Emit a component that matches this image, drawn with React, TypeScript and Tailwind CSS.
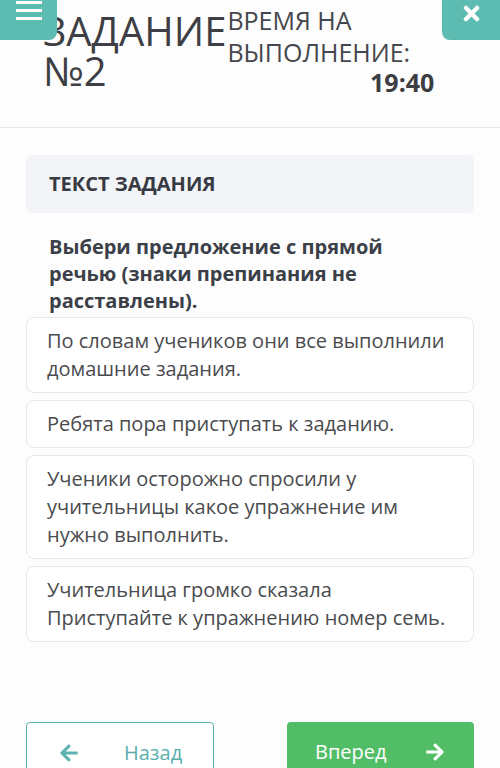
import { FaArrowLeft, FaArrowRight, FaTimes } from 'react-icons/fa'

const options = [
  'По словам учеников они все выполнили домашние задания.',
  'Ребята пора приступать к заданию.',
  'Ученики осторожно спросили у учительницы какое упражнение им нужно выполнить.',
  'Учительница громко сказала Приступайте к упражнению номер семь.',
]

function MenuButton() {
  return (
    <div className="absolute left-0 top-0 flex h-[40px] w-[57px] flex-col gap-[5px] rounded-br-lg bg-[#5dbcb2] pl-[16px] pt-[1px]">
      <span className="h-[3px] w-[26px] bg-white" />
      <span className="h-[3px] w-[26px] bg-white" />
      <span className="h-[3px] w-[26px] bg-white" />
    </div>
  )
}

function CloseButton() {
  return (
    <div className="absolute right-0 top-0 flex h-[40px] w-[58px] items-start justify-center rounded-bl-lg bg-[#5dbcb2] pt-[2px]">
      <FaTimes size={23} color="white" />
    </div>
  )
}

export default function App() {
  return (
    <div
      className="relative min-h-[768px] w-[500px] overflow-hidden bg-[#fdfdfd] text-[#3b3e45]"
      style={{ fontFamily: '"Open Sans", "Noto Sans", sans-serif' }}
    >
      {/* Header */}
      <div className="flex h-[128px] border-b border-[#e8e9eb] pl-[43px] pt-[11px]">
        <div className="text-[40px] leading-[40px] text-[#3d3f44]">
          ЗАДАНИЕ
          <br />
          №2
        </div>
        <div className="ml-[1px] mt-[-7px] flex w-[207px] flex-col text-[25px] leading-[32px] text-[#45474c]">
          <span>ВРЕМЯ НА</span>
          <span>ВЫПОЛНЕНИЕ:</span>
          <span className="mt-[-3px] text-right text-[25px] font-bold leading-[34px] text-[#3b3d42]">19:40</span>
        </div>
      </div>
      <MenuButton />
      <CloseButton />

      {/* Content */}
      <div className="px-[26px] pt-[27px]">
        <div className="flex h-[58px] items-center rounded-md bg-[#f2f4f7] pl-[23px] text-[20px] font-bold text-[#373a42]">
          ТЕКСТ ЗАДАНИЯ
        </div>
        <p className="mt-[20px] w-[375px] pl-[23px] text-[20px] font-bold leading-[27px] text-[#3b3f48]">
          Выбери предложение с прямой речью (знаки препинания не расставлены).
        </p>
        <div className="mt-[3px] flex flex-col gap-[7px]">
          {options.map((o) => (
            <div
              key={o}
              className="rounded-lg border border-[#e6e7e9] bg-white py-[9px] pl-[20px] pr-[14px] text-[20px] leading-[28px] text-[#4a4b4e]"
            >
              {o}
            </div>
          ))}
        </div>
      </div>

      {/* Footer buttons */}
      <div className="mt-[80px] flex justify-between px-[26px]">
        <div className="flex h-[60px] w-[188px] items-start rounded border border-[#5cb1ae] bg-white pt-[15px] text-[20px] text-[#5aafad]">
          <FaArrowLeft className="ml-[32px] mt-[5px]" size={20} color="#5cb3b0" />
          <span className="ml-[45px]">Назад</span>
        </div>
        <div className="flex h-[60px] w-[187px] items-start rounded bg-[#52bd67] pt-[15px] text-[20px] text-white">
          <span className="ml-[28px]">Вперед</span>
          <FaArrowRight className="ml-[38px] mt-[5px]" size={20} color="white" />
        </div>
      </div>
    </div>
  )
}
